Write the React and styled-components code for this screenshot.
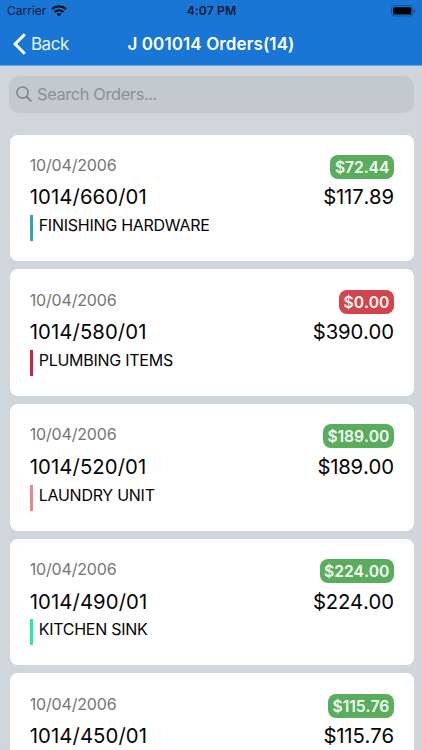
import styled, { createGlobalStyle } from "styled-components"

const GlobalStyle = createGlobalStyle`
    * {
        box-sizing: border-box;
    }

    body {
        margin: 0;
        background-color: #cfd7dd;
        font-family: Inter, "Liberation Sans", sans-serif;
        overflow: hidden;
    }
`

const Screen = styled.div`
    width: 100%;
    height: 750px;
    overflow: hidden;
`

const Header = styled.header`
    background-color: #1a76d4;
    border-bottom: 1px solid #64a0df;
    height: 66px;
`

const StatusBar = styled.div`
    align-items: center;
    color: #071c36;
    display: grid;
    grid-template-columns: 1fr auto 1fr;
    height: 21px;
    padding: 0 6px 0 7px;
`

const Carrier = styled.div`
    align-items: center;
    display: flex;
    font-size: 12px;
    gap: 5px;
    letter-spacing: 0;
`

const Time = styled.div`
    font-size: 12.2px;
    font-weight: 600;
    letter-spacing: 0.1px;
`

const BatteryIcon = styled.svg`
    justify-self: end;
`

const NavBar = styled.nav`
    align-items: center;
    color: #fff;
    display: grid;
    grid-template-columns: 1fr auto 1fr;
    height: 45px;
    padding: 0 13px;
`

const BackButton = styled.button`
    align-items: center;
    background: none;
    border: none;
    color: #e9f3fd;
    display: flex;
    font-family: inherit;
    font-size: 17px;
    gap: 5px;
    letter-spacing: -0.5px;
    padding: 0;
`

const Title = styled.h1`
    font-size: 17px;
    font-weight: 600;
    letter-spacing: 0.1px;
    margin: 0;
`

const SearchBox = styled.label`
    align-items: center;
    background-color: #c3cacd;
    border-radius: 10px;
    display: flex;
    gap: 5px;
    height: 37px;
    margin: 9.5px 8.5px 22.2px 9px;
    padding: 0 7px;
`

const SearchInput = styled.input`
    background: none;
    border: none;
    flex: 1;
    font-family: inherit;
    font-size: 16.4px;
    letter-spacing: -0.38px;
    outline: none;
    padding: 0 0 1px;

    &::placeholder {
        color: #8b9094;
        opacity: 1;
    }
`

const OrderList = styled.main`
    display: flex;
    flex-direction: column;
    gap: 8px;
    padding: 0 7.7px 0 9.5px;
`

const Card = styled.article`
    background-color: #fff;
    border-radius: 8px;
    display: flex;
    flex-shrink: 0;
    height: 126.7px;
    justify-content: space-between;
    padding: 20.3px 20.5px 0 20.2px;
`

const Details = styled.div`
    display: flex;
    flex-direction: column;
`

const OrderDate = styled.span`
    color: #757575;
    font-size: 16px;
    letter-spacing: -0.17px;
    line-height: 21px;
`

const OrderNumber = styled.span`
    color: #050505;
    font-size: 20.3px;
    letter-spacing: 0.1px;
    line-height: 26px;
    margin-top: 8.5px;
`

const Description = styled.span`
    border-left: 3px solid ${({ color }) => color};
    color: #050505;
    font-size: 16px;
    height: 26px;
    letter-spacing: -0.26px;
    line-height: 21px;
    margin-top: 4.7px;
    padding-left: 6px;
`

const Amounts = styled.div`
    align-items: flex-end;
    display: flex;
    flex-direction: column;
    font-kerning: none;
`

const Badge = styled.span`
    background-color: ${({ $paid }) => ($paid ? "#5bad5e" : "#d2454e")};
    border-radius: 8px;
    color: #f2faf2;
    font-size: 15.7px;
    font-weight: 600;
    height: 24px;
    letter-spacing: -0.1px;
    line-height: 25px;
    padding: 0 4.5px;
`

const Total = styled.span`
    color: #050505;
    font-size: 20.3px;
    letter-spacing: -0.2px;
    line-height: 26px;
    margin-top: 5.5px;
`

const orders = [
    { number: "1014/660/01", name: "FINISHING HARDWARE", color: "#2daaa7", due: "$72.44", total: "$117.89" },
    { number: "1014/580/01", name: "PLUMBING ITEMS", color: "#d01f4b", due: "$0.00", total: "$390.00" },
    { number: "1014/520/01", name: "LAUNDRY UNIT", color: "#ec8586", due: "$189.00", total: "$189.00" },
    { number: "1014/490/01", name: "KITCHEN SINK", color: "#22ee9c", due: "$224.00", total: "$224.00" },
    { number: "1014/450/01", name: "", color: "transparent", due: "$115.76", total: "$115.76" },
]

function OrderCard({ number, name, color, due, total }) {
    return (
        <Card>
            <Details>
                <OrderDate>10/04/2006</OrderDate>
                <OrderNumber>{number}</OrderNumber>
                <Description color={color}>{name}</Description>
            </Details>
            <Amounts>
                <Badge $paid={due !== "$0.00"}>{due}</Badge>
                <Total>{total}</Total>
            </Amounts>
        </Card>
    )
}

function App() {
    return (
        <Screen>
            <GlobalStyle />
            <Header>
                <StatusBar>
                    <Carrier>
                        Carrier
                        <svg width="16" height="12" viewBox="0 0 16 12" fill="none" stroke="#04101f" strokeWidth="2.3">
                            <path d="M1.1 4.2a10 10 0 0 1 13.8 0" />
                            <path d="M3.7 7a6.3 6.3 0 0 1 8.6 0" />
                            <path d="M8 11.6 5.6 9.1a3.5 3.5 0 0 1 4.8 0Z" fill="#04101f" stroke="none" />
                        </svg>
                    </Carrier>
                    <Time>4:07 PM</Time>
                    <BatteryIcon width="25" height="12" viewBox="0 0 25 12">
                        <rect x="0.6" y="0.6" width="21.4" height="10.4" rx="2.8" fill="none" stroke="#124f8e" />
                        <rect x="2.2" y="2.2" width="18.2" height="7.2" rx="1.5" fill="#000" />
                        <path d="M23.2 4v3.8q1.3-.6 1.3-1.9T23.2 4Z" fill="#124f8e" />
                    </BatteryIcon>
                </StatusBar>
                <NavBar>
                    <BackButton>
                        <svg width="13" height="22" viewBox="0 0 13 22" fill="none" stroke="#fff" strokeWidth="3">
                            <path d="M11.8 1.2 2.1 11l9.7 9.8" />
                        </svg>
                        Back
                    </BackButton>
                    <Title>J 001014 Orders(14)</Title>
                </NavBar>
            </Header>
            <SearchBox>
                <svg width="16" height="16" viewBox="0 0 16 16" fill="none" stroke="#7d8387" strokeWidth="1.5">
                    <circle cx="6.5" cy="6.5" r="5.6" />
                    <path d="m10.6 10.6 4.8 4.8" strokeWidth="1.8" />
                </svg>
                <SearchInput placeholder="Search Orders..." />
            </SearchBox>
            <OrderList>
                {orders.map((order) => (
                    <OrderCard key={order.number} {...order} />
                ))}
            </OrderList>
        </Screen>
    )
}

export default App
